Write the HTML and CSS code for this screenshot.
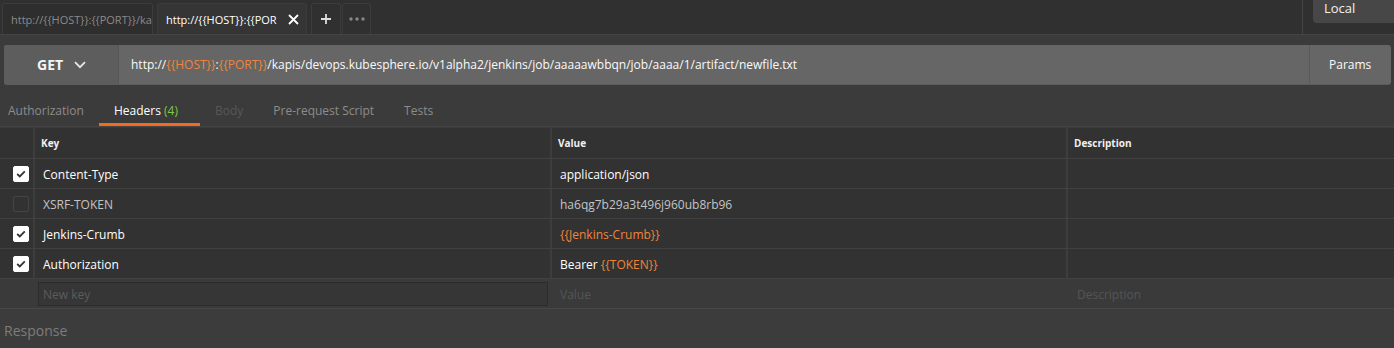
FILE: index.html
```html
<!DOCTYPE html>
<html>
<head>
<meta charset="utf-8">
<link rel="stylesheet" href="styles.css">
</head>
<body>
<div class="app">
  <div class="tabbar">
    <div class="tab tab-inactive"><span class="tab-label">http://{{HOST}}:{{PORT}}/ka</span></div>
    <div class="tab tab-active"><span class="tab-label">http://{{HOST}}:{{POR</span>
      <svg class="tab-close" width="11" height="11" viewBox="0 0 11 11"><path d="M1 1L10 10M10 1L1 10" stroke="#fff" stroke-width="1.8"/></svg>
    </div>
    <div class="tab-btns">
      <div class="tab-btn"><svg width="10" height="10" viewBox="0 0 10 10"><path d="M5 0V10M0 5H10" stroke="#ddd" stroke-width="1.8"/></svg></div>
      <div class="tab-btn"><svg width="16" height="4" viewBox="0 0 16 4"><circle cx="2" cy="2" r="1.7" fill="#888"/><circle cx="8" cy="2" r="1.7" fill="#888"/><circle cx="14" cy="2" r="1.7" fill="#888"/></svg></div>
    </div>
    <div class="tabbar-spacer"></div>
    <div class="env-sep"></div>
    <div class="env">Local</div>
  </div>

  <div class="urlbar">
    <div class="method">GET <svg width="12" height="8" viewBox="0 0 12 8"><path d="M1 1.2L6 6.2L11 1.2" stroke="#e6e6e6" stroke-width="1.8" fill="none"/></svg></div>
    <div class="url">http://<span class="var">{{HOST}}</span>:<span class="var">{{PORT}}</span>/kapis/devops.kubesphere.io/v1alpha2/jenkins/job/aaaaawbbqn/job/aaaa/1/artifact/newfile.txt</div>
    <div class="params">Params</div>
  </div>

  <div class="reqtabs">
    <div class="reqtab">Authorization</div>
    <div class="reqtab active">Headers <span class="count">(4)</span></div>
    <div class="reqtab disabled">Body</div>
    <div class="reqtab">Pre-request Script</div>
    <div class="reqtab">Tests</div>
  </div>

  <div class="table">
    <div class="row head">
      <div class="c-check"></div>
      <div class="c-key">Key</div>
      <div class="c-val">Value</div>
      <div class="c-desc">Description</div>
    </div>
    <div class="row">
      <div class="c-check"><span class="cb on"><svg width="10" height="8" viewBox="0 0 10 8"><path d="M1.2 4L3.8 6.4L8.8 1.3" stroke="#333" stroke-width="1.8" fill="none"/></svg></span></div>
      <div class="c-key">Content-Type</div>
      <div class="c-val">application/json</div>
      <div class="c-desc"></div>
    </div>
    <div class="row off">
      <div class="c-check"><span class="cb"></span></div>
      <div class="c-key">XSRF-TOKEN</div>
      <div class="c-val">ha6qg7b29a3t496j960ub8rb96</div>
      <div class="c-desc"></div>
    </div>
    <div class="row">
      <div class="c-check"><span class="cb on"><svg width="10" height="8" viewBox="0 0 10 8"><path d="M1.2 4L3.8 6.4L8.8 1.3" stroke="#333" stroke-width="1.8" fill="none"/></svg></span></div>
      <div class="c-key">Jenkins-Crumb</div>
      <div class="c-val"><span class="var">{{Jenkins-Crumb}}</span></div>
      <div class="c-desc"></div>
    </div>
    <div class="row">
      <div class="c-check"><span class="cb on"><svg width="10" height="8" viewBox="0 0 10 8"><path d="M1.2 4L3.8 6.4L8.8 1.3" stroke="#333" stroke-width="1.8" fill="none"/></svg></span></div>
      <div class="c-key">Authorization</div>
      <div class="c-val">Bearer <span class="var">{{TOKEN}}</span></div>
      <div class="c-desc"></div>
    </div>
    <div class="row newrow">
      <div class="n-check"></div>
      <div class="n-key"><div class="input">New key</div></div>
      <div class="n-val">Value</div>
      <div class="n-desc">Description</div>
    </div>
  </div>

  <div class="response">Response</div>
</div>
</body>
</html>
```

FILE: styles.css
```css
* { box-sizing: border-box; }
html, body { margin: 0; padding: 0; }
body {
  background: #3b3b3b;
  font-family: "Open Sans", "Noto Sans", sans-serif;
  font-size: 12px;
  color: #fff;
  width: 1394px;
  height: 348px;
  overflow: hidden;
}
.app { display: flex; flex-direction: column; height: 348px; }

.tabbar {
  height: 35px;
  background: #303030;
  border-bottom: 1px solid #444;
  display: flex;
  align-items: flex-end;
  padding-left: 2px;
}
.tab {
  height: 31px;
  border: 1px solid #3c3c3c;
  border-bottom: none;
  border-radius: 3px 3px 0 0;
  display: flex;
  align-items: center;
  overflow: hidden;
  white-space: nowrap;
  font-size: 11px;
}
.tab-inactive {
  width: 151px;
  background: #2e2e2e;
  color: #8a8a8a;
  padding-left: 8px;
}
.tab-active {
  width: 150px;
  margin-left: 4px;
  background: #353535;
  color: #fff;
  padding-left: 8px;
}
.tab-label { flex: 0 0 auto; }
.tab-close { margin-left: 11px; flex: none; }
.tab-btns { display: flex; margin-left: 4px; }
.tab-btn {
  height: 31px;
  width: 30px;
  border: 1px solid #3c3c3c;
  border-bottom: none;
  border-radius: 3px 3px 0 0;
  background: #303030;
  display: flex;
  align-items: center;
  justify-content: center;
}
.tab-btn + .tab-btn { width: 29px; margin-left: 1px; }
.tabbar-spacer { flex: 1; }
.env-sep { width: 1px; height: 34px; background: #444; align-self: flex-start; margin-right: 10px; }
.env {
  align-self: flex-start;
  width: 81px;
  height: 23px;
  background: #474747;
  border-radius: 0 0 0 4px;
  padding-left: 11px;
  line-height: 17px;
  font-size: 13px;
  color: #f2f2f2;
}

.urlbar {
  margin: 10px 3px 0 4px;
  height: 40px;
  background: #666;
  border-radius: 3px;
  border-bottom: 1px solid #5c5c5c;
  display: flex;
  align-items: stretch;
  overflow: hidden;
}
.method {
  width: 115px;
  background: #5d5d5d;
  border-right: 1px solid #575757;
  display: flex;
  align-items: center;
  padding-left: 33px;
  font-weight: 700;
  font-size: 14px;
  color: #f4f4f4;
  gap: 11px;
}
.url {
  flex: 1;
  display: flex;
  align-items: center;
  padding-left: 12px;
  color: #fafafa;
  white-space: pre;
}
.var { color: #f0843c; }
.params {
  width: 82px;
  border-left: 1px solid #5a5a5a;
  display: flex;
  align-items: center;
  padding-left: 19px;
  color: #fafafa;
}

.reqtabs {
  display: flex;
  margin-top: 11px;
  height: 31px;
  margin-left: -7px;
  border-bottom: 1px solid #444;
}
.reqtab {
  padding: 0 15px;
  display: flex;
  align-items: center;
  color: #8c8c8c;
  border-bottom: 3px solid transparent;
  padding-top: 1px;
  white-space: pre;
}
.reqtab.active { color: #fff; border-bottom-color: #f26b21; padding-right: 22px; }
.reqtab.disabled { color: #575757; }
.count { color: #7cc743; }

.table { display: flex; flex-direction: column; margin-top: 1px; }
.row {
  display: flex;
  height: 30px;
  background: #323232;
  border-bottom: 1px solid #414141;
}
.row > div { display: flex; align-items: center; white-space: pre; padding-top: 1px; }
.c-check { width: 35px; border-right: 2px solid #3d3d3d; padding-left: 13px; }
.c-key { width: 517px; border-right: 2px solid #3d3d3d; padding-left: 8px; }
.c-val { width: 516px; border-right: 2px solid #3d3d3d; padding-left: 8px; }
.c-desc { flex: 1; padding-left: 6px; }
.head { height: 31px; }
.head > div { font-size: 10px; font-weight: 700; color: #f0f0f0; padding-top: 0; }
.head .c-key { padding-left: 6px; }
.head .c-val { padding-left: 6px; }
.head .c-desc { padding-left: 6px; }
.off > div { color: #c4c4c4; }
.cb {
  width: 16px;
  height: 16px;
  border-radius: 2px;
  border: 1px solid #454545;
  display: flex;
  align-items: center;
  justify-content: center;
}
.cb.on { background: #fff; border-color: #fff; }

.newrow { background: #3a3a3a; border-bottom: 1px solid #474747; }
.n-check { width: 38px; }
.n-key { width: 522px; }
.n-key .input {
  width: 510px;
  height: 24px;
  border: 1px solid #2c2c2c;
  background: #363636;
  color: #5c5c5c;
  padding-left: 4px;
  display: flex;
  align-items: center;
}
.n-val { width: 516px; color: #555; }
.n-desc { flex: 1; color: #555; padding-left: 1px; }

.response {
  flex: 1;
  background: #3c3c3c;
  color: #7c7c7c;
  font-size: 14px;
  padding-left: 4px;
  padding-top: 12px;
}
```
